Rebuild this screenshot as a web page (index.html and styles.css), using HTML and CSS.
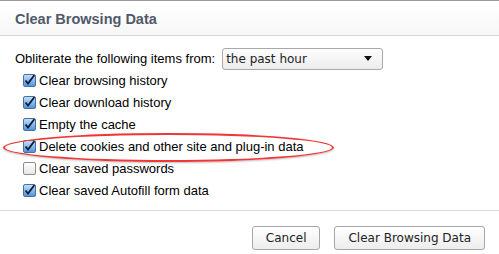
FILE: index.html
```html
<!DOCTYPE html>
<html lang="en">
<head>
    <meta charset="UTF-8">
    <title>Clear Browsing Data</title>
    <link rel="stylesheet" href="styles.css">
</head>
<body>
    <div class="dialog">
        <!-- header -->
        <div class="dialog-header">Clear Browsing Data</div>

        <!-- body -->
        <div class="dialog-body">
            <div class="range-row">
                <span>Obliterate the following items from:</span>
                <div class="select">
                    <span>the past hour</span>
                    <span class="arrow"></span>
                </div>
            </div>

            <ul class="items">
                <li><span class="box checked"></span>Clear browsing history</li>
                <li><span class="box checked"></span>Clear download history</li>
                <li><span class="box checked"></span>Empty the cache</li>
                <li class="marked"><span class="box checked"></span>Delete cookies and other site and plug-in data
                    <span class="ring"></span>
                </li>
                <li><span class="box"></span>Clear saved passwords</li>
                <li><span class="box checked"></span>Clear saved Autofill form data</li>
            </ul>
        </div>

        <!-- footer -->
        <div class="dialog-footer">
            <button type="button">Cancel</button>
            <button type="button">Clear Browsing Data</button>
        </div>
    </div>
</body>
</html>
```

FILE: styles.css
```css
body {
    margin: 0;
    background-color: #fff;
    font-family: "Liberation Sans", Arial, sans-serif;
    font-size: 13px;
    color: #000;
}

.dialog {
    border-top: 1px solid #9a9a9a;
    width: 499px;
    height: 253px;
    display: flex;
    flex-direction: column;
}

/* header */
.dialog-header {
    height: 35px;
    box-sizing: border-box;
    padding: 10px 15px 0;
    font-size: 14.5px;
    font-weight: bold;
    color: #505969;
    background: linear-gradient(#ffffff, #f7f7f7);
    border-bottom: 1px solid #dadada;
}

/* body */
.dialog-body {
    padding: 11px 15px 0;
    height: 175px;
    box-sizing: border-box;
    border-bottom: 1px solid #dcdcdc;
}

.range-row {
    display: flex;
    align-items: center;
    gap: 7px;
    height: 23px;
}

.select {
    width: 161px;
    height: 22px;
    box-sizing: border-box;
    border: 1px solid #a8a8a8;
    border-radius: 3px;
    background: linear-gradient(#fdfdfd, #ececec);
    display: flex;
    align-items: center;
    justify-content: space-between;
    padding: 0 10px 0 3px;
    font-family: "DejaVu Sans", sans-serif;
    font-size: 12px;
    color: #222;
}

.arrow {
    width: 0;
    height: 0;
    border-left: 4px solid transparent;
    border-right: 4px solid transparent;
    border-top: 5px solid #111;
}

.items {
    list-style: none;
    margin: -1px 0 0;
    padding: 0 0 0 8px;
}

.items li {
    display: flex;
    align-items: center;
    gap: 3px;
    height: 22px;
    position: relative;
}

.box {
    width: 13px;
    height: 13px;
    box-sizing: border-box;
    border: 1px solid #8d8d8d;
    border-radius: 2px;
    background: linear-gradient(#ffffff, #e6e6e6);
    flex: none;
}

.box.checked {
    border-color: #4a6f9c;
    background: url("data:image/svg+xml,%3Csvg xmlns='http://www.w3.org/2000/svg' width='13' height='13'%3E%3Cpath d='M2.5 6.5 L5 9.5 L11.5 1' fill='none' stroke='%23111a33' stroke-width='1.8'/%3E%3C/svg%3E") center/13px 13px no-repeat, linear-gradient(#c2def7, #4e97e0);
}

/* red annotation ring */
.ring {
    position: absolute;
    left: -20px;
    top: -2px;
    width: 327px;
    height: 25px;
    border: 2px solid #f03636;
    border-radius: 50%;
    box-shadow: 0 1px 2px rgba(0, 0, 0, 0.25);
}

/* footer */
.dialog-footer {
    display: flex;
    justify-content: flex-end;
    gap: 14px;
    padding: 15px 14px 0;
}

.dialog-footer button {
    height: 24px;
    padding: 0 13px;
    border: 1px solid #a6a6a6;
    border-radius: 3px;
    background: linear-gradient(#ffffff, #ededed);
    font-family: "DejaVu Sans", sans-serif;
    font-size: 12px;
    color: #222;
}
```
